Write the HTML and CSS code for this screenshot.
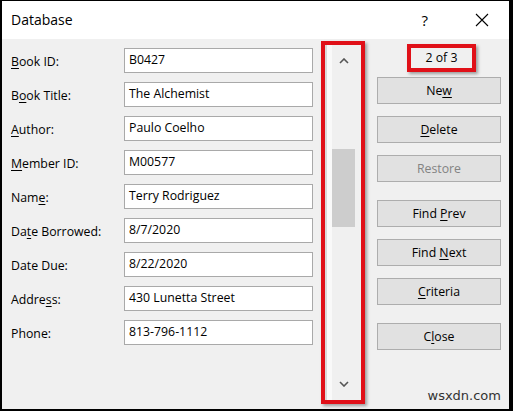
FILE: index.html
```html
<!DOCTYPE html>
<html lang="en">
<head>
    <meta charset="UTF-8">
    <title>Database</title>
    <link rel="stylesheet" href="styles.css">
</head>
<body>
    <div class="window">
        <div class="titlebar">
            <span class="title">Database</span>
            <span class="help">?</span>
            <svg class="close-x" width="14" height="14" viewBox="0 0 14 14">
                <path d="M1 1 L13 13 M13 1 L1 13" stroke="#000" stroke-width="1.1" fill="none"/>
            </svg>
        </div>

        <div class="dialog">
            <div class="fields">
                <div class="row"><label><u>B</u>ook ID:</label><div class="field">B0427</div></div>
                <div class="row"><label>B<u>o</u>ok Title:</label><div class="field">The Alchemist</div></div>
                <div class="row"><label><u>A</u>uthor:</label><div class="field">Paulo Coelho</div></div>
                <div class="row"><label><u>M</u>ember ID:</label><div class="field">M00577</div></div>
                <div class="row"><label>Nam<u>e</u>:</label><div class="field">Terry Rodriguez</div></div>
                <div class="row"><label>Da<u>t</u>e Borrowed:</label><div class="field">8/7/2020</div></div>
                <div class="row"><label>Date Due:</label><div class="field">8/22/2020</div></div>
                <div class="row"><label>Addre<u>s</u>s:</label><div class="field">430 Lunetta Street</div></div>
                <div class="row"><label>Phone:</label><div class="field">813-796-1112</div></div>
            </div>

            <div class="scroll-box">
                <div class="scrollbar">
                    <div class="arrow">
                        <svg width="10" height="6" viewBox="0 0 10 6"><path d="M1 5 L5 1 L9 5" stroke="#555" stroke-width="1.6" fill="none"/></svg>
                    </div>
                    <div class="track">
                        <div class="thumb"></div>
                    </div>
                    <div class="arrow">
                        <svg width="10" height="6" viewBox="0 0 10 6"><path d="M1 1 L5 5 L9 1" stroke="#555" stroke-width="1.6" fill="none"/></svg>
                    </div>
                </div>
            </div>

            <div class="actions">
                <div class="counter">2 of 3</div>
                <button class="btn">Ne<u>w</u></button>
                <button class="btn"><u>D</u>elete</button>
                <button class="btn" disabled>Restore</button>
                <button class="btn group">Find <u>P</u>rev</button>
                <button class="btn">Find <u>N</u>ext</button>
                <button class="btn"><u>C</u>riteria</button>
                <button class="btn group">C<u>l</u>ose</button>
                <div class="watermark">wsxdn.com</div>
            </div>
        </div>
    </div>
</body>
</html>
```

FILE: styles.css
```css
* {
    margin: 0;
    padding: 0;
    box-sizing: border-box;
}

body {
    background: #000;
    font-family: 'Open Sans', 'Noto Sans', sans-serif;
    font-size: 12.3px;
    color: #000;
    width: 513px;
    height: 411px;
    overflow: hidden;
}

.window {
    margin: 1px 4px 2px 2px;
    height: 408px;
    display: flex;
    flex-direction: column;
}

/* title bar */
.titlebar {
    height: 38px;
    background: #fff;
    display: flex;
    align-items: center;
    padding-left: 9px;
}

.title {
    font-size: 14px;
    flex: 1;
    margin-top: -1px;
}

.help {
    font-size: 15px;
    margin-right: 47px;
}

.close-x {
    margin-right: 20px;
}

/* dialog body */
.dialog {
    flex: 1;
    background: #f0f0f0;
    display: flex;
    padding-left: 9px;
}

.fields {
    width: 302px;
    padding-top: 9px;
    display: flex;
    flex-direction: column;
    gap: 9px;
}

.row {
    display: flex;
    align-items: center;
    height: 25px;
}

.row label {
    width: 113px;
    padding-top: 1px;
}

.field {
    width: 189px;
    height: 25px;
    background: #fff;
    border: 1px solid #a9a9a9;
    padding-left: 4px;
    line-height: 22px;
}

u {
    text-decoration-thickness: 1px;
    text-underline-offset: 2px;
}

/* scrollbar, framed in red */
.scroll-box {
    margin: 2px 0 5px 8px;
    width: 44px;
    border: 4px solid #e01018;
    box-shadow: 2px 2px 3px rgba(0, 0, 0, 0.35);
}

.scrollbar {
    height: 100%;
    display: flex;
    flex-direction: column;
    background: linear-gradient(to right, #d9d9d9 0, #d9d9d9 2px, #f9f9f9 2px, #f9f9f9 7px, #f0f0f0 7px);
}

.arrow {
    height: 32px;
    display: flex;
    align-items: center;
    justify-content: center;
    padding-left: 2px;
}

.track {
    flex: 1;
}

.thumb {
    margin: 72px 0 0 7px;
    width: 23px;
    height: 78px;
    background: #cdcdcd;
}

/* command buttons */
.actions {
    margin-left: 12px;
    width: 124px;
    display: flex;
    flex-direction: column;
    position: relative;
}

.counter {
    margin: 5px 0 0 30px;
    width: 69px;
    height: 28px;
    border: 4px solid #e01018;
    box-shadow: 2px 2px 3px rgba(0, 0, 0, 0.35);
    text-align: center;
    line-height: 19px;
}

.btn {
    margin-top: 12px;
    height: 27px;
    font: inherit;
    color: #000;
    background: #e1e1e1;
    border: 1px solid #adadad;
}

.actions .counter + .btn {
    margin-top: 5px;
}

.btn.group {
    margin-top: 18px;
}

.btn:disabled {
    color: #838383;
}

.watermark {
    position: absolute;
    right: 0;
    bottom: 6px;
    font-family: 'DejaVu Sans', sans-serif;
    font-size: 13px;
    color: #333;
}
```
